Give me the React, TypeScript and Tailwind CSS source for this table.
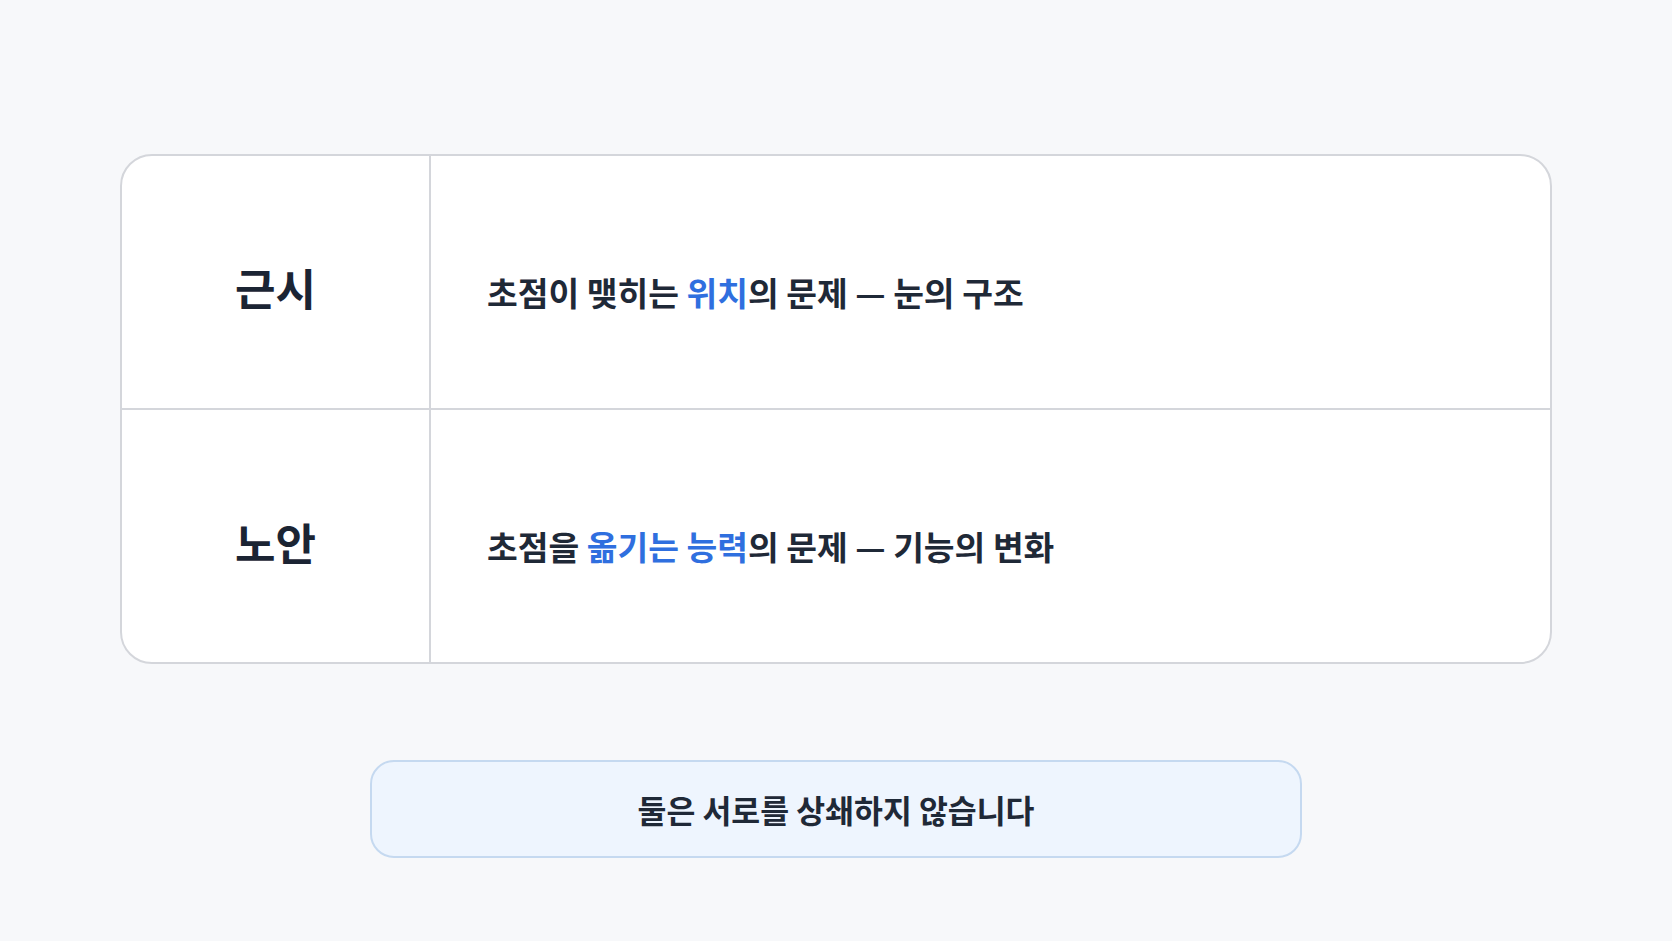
import React from "react";

const font = { fontFamily: '"Noto Sans CJK KR", "Noto Sans", sans-serif' };

export default function App() {
  return (
    <div
      className="min-h-[941px] w-full bg-[#f7f8fa] flex flex-col items-center pt-[154px]"
      style={font}
    >
      <div className="w-[1432px] rounded-[32px] border-2 border-[#d4d6db] bg-white overflow-hidden flex flex-col">
        <div className="flex h-[254px] border-b-2 border-[#d4d6db]">
          <div className="w-[309px] shrink-0 border-r-2 border-[#d4d6db] flex items-center justify-center pt-[10px]">
            <span className="text-[44px] font-bold text-[#1b2433] leading-none">근시</span>
          </div>
          <div className="flex-1 flex items-center pl-[56px] pt-[20px]">
            <span className="text-[33.4px] font-semibold text-[#1f2937] leading-none">
              초점이 맺히는 <span className="text-[#2f6fdf]">위치</span>의 문제 — 눈의 구조
            </span>
          </div>
        </div>
        <div className="flex h-[252px]">
          <div className="w-[309px] shrink-0 border-r-2 border-[#d4d6db] flex items-center justify-center pt-[12px]">
            <span className="text-[44px] font-bold text-[#1b2433] leading-none">노안</span>
          </div>
          <div className="flex-1 flex items-center pl-[56px] pt-[20px]">
            <span className="text-[33.4px] font-semibold text-[#1f2937] leading-none">
              초점을 <span className="text-[#2f6fdf]">옮기는 능력</span>의 문제 — 기능의 변화
            </span>
          </div>
        </div>
      </div>
      <div className="mt-[96px] w-[932px] h-[98px] rounded-[24px] border-2 border-[#c5d9f0] bg-[#eef5fe] flex items-center justify-center pt-[2px]">
        <span className="text-[31.4px] font-semibold text-[#1f2937] leading-none">둘은 서로를 상쇄하지 않습니다</span>
      </div>
    </div>
  );
}
